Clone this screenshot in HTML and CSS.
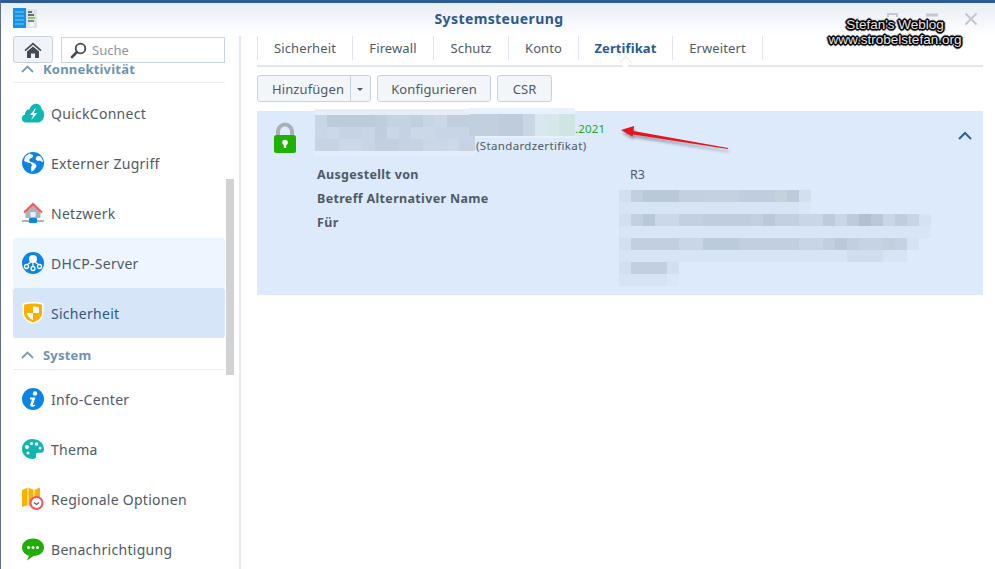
FILE: index.html
```html
<!DOCTYPE html>
<html lang="de">
<head>
<meta charset="utf-8">
<title>Systemsteuerung</title>
<link rel="stylesheet" href="styles.css">
</head>
<body>
<div class="window">
  <header class="titlebar">
    <svg class="app-icon" width="25" height="21" viewBox="0 0 25 21">
      <rect x="0" y="0" width="13" height="20" fill="#1492e6"/>
      <path d="M2 4h9M2 8h9M2 12h9M2 16h9" stroke="#7cc6f5" stroke-width="1"/>
      <rect x="13" y="1" width="11" height="19" fill="#dfe3e6"/>
      <path d="M15 4h4M15 7h6" stroke="#3a4a5a" stroke-width="1.4"/>
      <path d="M15 10h7" stroke="#7ab82e" stroke-width="1.4"/>
      <path d="M15 13h6" stroke="#3a4a5a" stroke-width="1.2"/>
      <circle cx="18.500" cy="16.500" r="2.500" fill="#f6f7f7"/>
    </svg>
    <h1 class="title">Systemsteuerung</h1>
    <div class="win-buttons">
      <svg class="win-btn win-pin" width="14" height="14" viewBox="0 0 14 14"><path d="M2 5V2h9v3" fill="none" stroke="#c3c9cf" stroke-width="2"/></svg>
      <svg class="win-btn win-min" width="14" height="14" viewBox="0 0 14 14"><path d="M1 3h12" stroke="#c3c9cf" stroke-width="3"/></svg>
      <svg class="win-btn" width="14" height="14" viewBox="0 0 14 14"><path d="M1.500 1.500l11 11M12.500 1.500l-11 11" stroke="#bfc6cd" stroke-width="1.800" fill="none"/></svg>
    </div>
  </header>

  <div class="content">
    <aside class="sidebar">
      <div class="side-tools">
        <button class="home-btn" type="button" aria-label="Start">
          <svg width="18" height="16" viewBox="0 0 18 16"><path d="M9 0.500L0.500 8l1 1.200L9 2.800l7.500 6.400 1-1.200z" fill="#3f4a55"/><path d="M3 9.500L9 4.400l6 5.100V16h-4v-4.500H7V16H3z" fill="#3f4a55"/></svg>
        </button>
        <label class="search">
          <svg width="17" height="17" viewBox="0 0 17 17"><circle cx="10.500" cy="6.500" r="4.800" fill="none" stroke="#3f4a55" stroke-width="1.800"/><path d="M7 10l-5 5" stroke="#3f4a55" stroke-width="2.600" stroke-linecap="round"/></svg>
          <span class="search-text">Suche</span>
        </label>
      </div>
      <div class="side-scroll">
        <h2 class="section section-first"><svg class="chev" width="13" height="8" viewBox="0 0 13 8"><path d="M1 7l5.500-5.500L12 7" fill="none" stroke="#7b9ab6" stroke-width="1.800"/></svg>Konnektivität</h2>
        <ul class="items">
          <li class="item">
            <svg class="ico" width="24" height="24" viewBox="0 0 24 24"><path d="M5 21.500c-2.700 0-4.200-1.900-4.200-4 0-2 1.300-3.300 3-3.800C4 10 6.300 8 8.500 8.500 9.500 5 12.200 2.500 15.500 2.800c3 .3 5 2.500 5.200 5.400 2 1.300 2.800 3.500 2.500 6-.3 4-3 7.300-7 7.300z" fill="#11b6b0"/><path d="M14.500 7l-5.500 7h3.300l-2 5 6-7h-3.300l1.800-5z" fill="#fff"/></svg>
            <span>QuickConnect</span>
          </li>
          <li class="item">
            <svg class="ico" width="24" height="24" viewBox="0 0 24 24"><circle cx="12" cy="12" r="11" fill="#0b84e3"/><path d="M8 2.500L4 6l-1 4 3.500 1.500 3 .5 1.500 2-1 2.500.5 4.500 2.500-2 2.500-3.500-.5-2-3-2-2.500-.5L8 9l1-1.500 2.500-1L12 4zM16 5l-1.500 3 2 2 2.500-.5 3 2c0-3-1.500-5-3-6.500z" fill="#fff"/></svg>
            <span>Externer Zugriff</span>
          </li>
          <li class="item">
            <svg class="ico" width="24" height="24" viewBox="0 0 24 24"><path d="M12 3.500L4.500 10.500V17h15v-6.500z" fill="#aab4bf"/><path d="M3 11.500l9-8.500 9 8.500" fill="none" stroke="#f55a5a" stroke-width="2"/><rect x="9.500" y="11" width="5" height="5" fill="#eef1f4"/><rect x="1" y="19" width="22" height="2" fill="#aab4bf"/><rect x="8" y="17" width="8" height="5" rx="1" fill="#0b84e3"/></svg>
            <span>Netzwerk</span>
          </li>
          <li class="item item-hover">
            <svg class="ico" width="24" height="24" viewBox="0 0 24 24"><circle cx="12" cy="12" r="11" fill="#0b84e3"/><circle cx="12" cy="8" r="4" fill="#fff"/><path d="M12 11v5M10 11l-4 3M14 11l4 3" stroke="#fff" stroke-width="1.200"/><g fill="#0b84e3" stroke="#fff" stroke-width="1.300"><circle cx="5.500" cy="15.500" r="2"/><circle cx="12" cy="17.500" r="2"/><circle cx="18.500" cy="15.500" r="2"/></g></svg>
            <span>DHCP-Server</span>
          </li>
          <li class="item item-active">
            <svg class="ico" width="24" height="24" viewBox="0 0 24 24"><path d="M12 1c4 0 7.500 .6 10.500 1.500V12c0 5.500-5 9.500-10.500 11C6.500 21.500 1.500 17.500 1.500 12V2.500C4.500 1.600 8 1 12 1z" fill="#fff"/><path d="M12 2.500c3.500 0 6.500 .5 9 1.200V12c0 4.500-4.200 8-9 9.500C7.200 20 3 16.500 3 12V3.700C5.500 3 8.500 2.500 12 2.500z" fill="#fbb000"/><path d="M12 5.500c2.500 0 4.500 .2 6 .7V12h-6zM12 12v7C9 17.800 6.500 15.500 6 12z" fill="#fff"/></svg>
            <span>Sicherheit</span>
          </li>
        </ul>
        <h2 class="section"><svg class="chev" width="13" height="8" viewBox="0 0 13 8"><path d="M1 7l5.500-5.500L12 7" fill="none" stroke="#7b9ab6" stroke-width="1.800"/></svg>System</h2>
        <ul class="items items-system">
          <li class="item">
            <svg class="ico" width="24" height="24" viewBox="0 0 24 24"><circle cx="12" cy="12" r="11" fill="#0b84e3"/><circle cx="14" cy="6.500" r="2.200" fill="#fff"/><path d="M9 10.500h5.500L12 17.500c-.2.800.5.800 2 0l.3.900C12.500 20 8.800 20.500 9.300 17.500L11 12.500H9z" fill="#fff"/></svg>
            <span>Info-Center</span>
          </li>
          <li class="item">
            <svg class="ico" width="24" height="24" viewBox="0 0 24 24"><path d="M11 2C5.500 2 1 6.500 1 12s4.500 10 10.500 10c3 0 4-1.500 3.500-3.200-.5-1.800.5-3 2.300-3h2.700c2 0 3-1.500 3-3.300C23 6 17.500 2 11 2z" fill="#11b6b0"/><g fill="#fff"><circle cx="6" cy="10" r="2"/><circle cx="10.500" cy="6.500" r="1.500"/><circle cx="15.500" cy="7" r="1.800"/><circle cx="19" cy="11" r="1.500"/><circle cx="7" cy="16" r="1.500"/></g></svg>
            <span>Thema</span>
          </li>
          <li class="item">
            <svg class="ico" width="24" height="24" viewBox="0 0 24 24"><path d="M1 3l6-2.500 6 2.500 6-2.500V12H13v8l-6-2-6 2z" fill="#fbb000"/><path d="M7 .5V18M13 3v14" stroke="#fff" stroke-width="1"/><circle cx="15.500" cy="16" r="6" fill="#fff" stroke="#f0545a" stroke-width="2"/><path d="M13 15.500l2.500 2 2.500-2" fill="none" stroke="#555e68" stroke-width="1.300"/></svg>
            <span>Regionale Optionen</span>
          </li>
          <li class="item">
            <svg class="ico" width="24" height="24" viewBox="0 0 24 24"><path d="M12 1.500C5.500 1.500 1 5.500 1 10.500c0 4 3 7.200 7 8.300L6 23.500l6.500-4.500C18.800 19 23 15.200 23 10.500S18.500 1.500 12 1.500z" fill="#22ad05"/><g fill="#fff"><circle cx="7.500" cy="10.500" r="1.500"/><circle cx="12" cy="10.500" r="1.500"/><circle cx="16.500" cy="10.500" r="1.500"/></g></svg>
            <span>Benachrichtigung</span>
          </li>
        </ul>
      </div>
      <div class="scrollbar"></div>
    </aside>

    <main class="main">
      <nav class="tabs">
        <a class="tab tab-a">Sicherheit</a>
        <a class="tab tab-b">Firewall</a>
        <a class="tab tab-c">Schutz</a>
        <a class="tab tab-d">Konto</a>
        <a class="tab tab-e tab-current">Zertifikat</a>
        <a class="tab tab-f">Erweitert</a>
      </nav>
      <div class="toolbar">
        <div class="btn split"><span class="split-label">Hinzufügen</span><span class="split-caret"></span></div>
        <button class="btn btn-conf" type="button">Konfigurieren</button>
        <button class="btn btn-csr" type="button">CSR</button>
      </div>
      <section class="card">
        <svg class="mosaic-head" width="260" height="48" viewBox="0 0 260 48">
          <rect x="0" y="1" width="160" height="47" fill="#e4edf9"/>
          <rect x="154" y="0" width="106" height="30" fill="#e8f0fb"/>
          <g>
            <rect x="0" y="7" width="12" height="12" fill="#c8d5e6"/><rect x="12" y="7" width="12" height="12" fill="#bccbdb"/><rect x="24" y="7" width="36" height="12" fill="#bccbdb"/><rect x="60" y="7" width="12" height="12" fill="#bfcedf"/><rect x="72" y="7" width="24" height="12" fill="#c4d2e3"/><rect x="96" y="7" width="12" height="12" fill="#c0cfe0"/><rect x="108" y="7" width="12" height="12" fill="#c8d5e6"/><rect x="120" y="7" width="12" height="12" fill="#cbd8e8"/><rect x="132" y="7" width="28" height="12" fill="#c0cee0"/>
            <rect x="0" y="19" width="12" height="12" fill="#c8d6e7"/><rect x="12" y="19" width="12" height="12" fill="#cbd8e9"/><rect x="24" y="19" width="24" height="12" fill="#c5d3e4"/><rect x="48" y="19" width="12" height="12" fill="#c8d5e7"/><rect x="60" y="19" width="12" height="12" fill="#bfcddf"/><rect x="72" y="19" width="12" height="12" fill="#c9d7e8"/><rect x="84" y="19" width="12" height="12" fill="#c4d2e4"/><rect x="96" y="19" width="24" height="12" fill="#cbd8e8"/><rect x="120" y="19" width="40" height="12" fill="#c8d5e6"/>
            <rect x="0" y="31" width="24" height="12" fill="#c5d3e4"/><rect x="24" y="31" width="24" height="12" fill="#cbd8e8"/><rect x="48" y="31" width="12" height="12" fill="#c8d5e6"/><rect x="60" y="31" width="24" height="12" fill="#c1cfe0"/><rect x="84" y="31" width="24" height="12" fill="#c4d2e3"/><rect x="108" y="31" width="24" height="12" fill="#cad7e8"/><rect x="132" y="31" width="12" height="12" fill="#ccd9ea"/><rect x="144" y="31" width="16" height="12" fill="#c6d3e5"/>
            <rect x="154" y="6" width="30" height="22" fill="#c1cfde"/><rect x="184" y="6" width="24" height="22" fill="#bfccdb"/><rect x="208" y="6" width="12" height="22" fill="#c9d6e6"/><rect x="220" y="6" width="12" height="22" fill="#d9e7ee"/><rect x="232" y="6" width="12" height="22" fill="#d6e8e8"/><rect x="244" y="6" width="16" height="22" fill="#cfe5e2"/>
          </g>
        </svg>
        <div class="card-head">
          <svg class="lock" width="24" height="31" viewBox="0 0 24 31"><path d="M5 14V9.500a7 7 0 0 1 14 0V14" fill="none" stroke="#aab0b6" stroke-width="4"/><rect x="1" y="13" width="22" height="18" rx="2.500" fill="#1fb200"/><circle cx="12" cy="20.500" r="2.800" fill="#fff"/><rect x="10.800" y="21" width="2.400" height="5" fill="#fff"/></svg>
          <div class="cert-name">
            <div class="cert-date">.2021</div>
            <div class="cert-default">(Standardzertifikat)</div>
          </div>
          <svg class="collapse" width="14" height="9" viewBox="0 0 14 9"><path d="M1 8l6-6 6 6" fill="none" stroke="#2c6294" stroke-width="2"/></svg>
        </div>
        <dl class="details">
          <dt>Ausgestellt von</dt>
          <dd>R3</dd>
          <dt>Betreff Alternativer Name</dt>
          <dd class="mosaic-cell">
            <svg class="mosaic-detail" width="324" height="96" viewBox="0 0 324 96">
              <rect x="0" y="0" width="192" height="12" fill="#c1cfe0"/><rect x="0" y="0" width="12" height="12" fill="#d2dfef"/><rect x="12" y="0" width="12" height="12" fill="#c1cfe0"/><rect x="24" y="0" width="36" height="12" fill="#b9c9d8"/><rect x="60" y="0" width="24" height="12" fill="#c3d0e0"/><rect x="84" y="0" width="36" height="12" fill="#c3d1e0"/><rect x="120" y="0" width="36" height="12" fill="#bfcddf"/><rect x="156" y="0" width="12" height="12" fill="#c5d1dc"/><rect x="168" y="0" width="12" height="12" fill="#bccadc"/><rect x="180" y="0" width="12" height="12" fill="#d2dfef"/>
              <rect x="0" y="12" width="180" height="12" fill="#d7e4f5"/><rect x="180" y="12" width="12" height="12" fill="#dae7f8"/>
              <rect x="0" y="24" width="300" height="12" fill="#c2d0e1"/><rect x="0" y="24" width="12" height="12" fill="#d2dfef"/><rect x="24" y="24" width="12" height="12" fill="#b8c8d9"/><rect x="36" y="24" width="24" height="12" fill="#cbd8e9"/><rect x="84" y="24" width="48" height="12" fill="#bfcddf"/><rect x="144" y="24" width="12" height="12" fill="#b9c9d7"/><rect x="180" y="24" width="24" height="12" fill="#c9d6e8"/><rect x="204" y="24" width="12" height="12" fill="#bdcbdd"/><rect x="216" y="24" width="12" height="12" fill="#c9d6e8"/><rect x="228" y="24" width="12" height="12" fill="#becbdd"/><rect x="240" y="24" width="12" height="12" fill="#b2c1d1"/><rect x="252" y="24" width="12" height="12" fill="#bac8da"/><rect x="264" y="24" width="12" height="12" fill="#c9d6e7"/><rect x="276" y="24" width="24" height="12" fill="#bfcddf"/><rect x="288" y="24" width="12" height="12" fill="#c7d5e6"/><rect x="300" y="24" width="12" height="12" fill="#d5e2f3"/>
              <rect x="0" y="36" width="312" height="12" fill="#d8e5f6"/>
              <rect x="0" y="48" width="288" height="12" fill="#c1cfe0"/><rect x="0" y="48" width="12" height="12" fill="#d2dfef"/><rect x="60" y="48" width="24" height="12" fill="#c9d6e8"/><rect x="84" y="48" width="36" height="12" fill="#bccbdc"/><rect x="180" y="48" width="24" height="12" fill="#c8d5e7"/><rect x="204" y="48" width="12" height="12" fill="#c1cfdf"/><rect x="216" y="48" width="12" height="12" fill="#bac8da"/><rect x="240" y="48" width="24" height="12" fill="#c6d3e5"/><rect x="264" y="48" width="12" height="12" fill="#c1cfde"/><rect x="276" y="48" width="12" height="12" fill="#c5d2e4"/><rect x="288" y="48" width="12" height="12" fill="#d5e2f3"/>
              <rect x="0" y="60" width="288" height="12" fill="#d7e4f5"/><rect x="228" y="60" width="36" height="12" fill="#d0ddee"/>
              <rect x="0" y="72" width="60" height="12" fill="#c1cfe0"/><rect x="0" y="72" width="12" height="12" fill="#d2dfef"/><rect x="48" y="72" width="12" height="12" fill="#d2dfef"/>
              <rect x="0" y="84" width="48" height="12" fill="#d6e3f4"/><rect x="48" y="84" width="12" height="12" fill="#dae7f8"/>
            </svg>
          </dd>
          <dt>Für</dt>
        </dl>
      </section>
    </main>
  </div>

  <svg class="arrow" width="120" height="30" viewBox="0 0 120 30">
    <path d="M1 7L14 3l-.5 5L108 25v1L13 11.500l-.5 2z" fill="#e8141c"/>
  </svg>
  <div class="watermark"><span>Stefan's Weblog</span><span>www.strobelstefan.org</span></div>
</div>
</body>
</html>
```

FILE: styles.css
```css
* { box-sizing: border-box; }
html, body { margin: 0; height: 100%; overflow: hidden; background: #fff; }
body {
  font-family: "Noto Sans", "Open Sans", sans-serif;
  font-size: 14px;
  color: #505a64;
}
.window {
  position: relative;
  width: 995px;
  height: 569px;
  display: flex;
  flex-direction: column;
  border-top: 3px solid #2c5a92;
  border-left: 1px solid #5d6d82;
  overflow: hidden;
}
.titlebar {
  height: 32px;
  flex: none;
  display: flex;
  align-items: center;
  padding-left: 12px;
  background: linear-gradient(#e8edf4, #fbfcfd 85%, #fff);
  position: relative;
}
.app-icon { display: block; margin-top: -1px; }
.title {
  position: absolute;
  left: 2px;
  right: 0;
  top: 7px;
  margin: 0;
  text-align: center;
  font-size: 14px;
  line-height: 18px;
  font-weight: 700;
  color: #2c5a8f;
  letter-spacing: .4px;
}
.win-buttons {
  margin-left: auto;
  margin-right: 17px;
  display: flex;
  gap: 25px;
  align-items: center;
}
.win-btn { display: block; }
.content { flex: 1; display: flex; min-height: 0; }
.sidebar {
  width: 240px;
  flex: none;
  position: relative;
  padding-left: 12px;
  padding-top: 1px;
  display: flex;
  flex-direction: column;
  min-height: 0;
}
.sidebar::after {
  content: "";
  position: absolute;
  top: 1px;
  bottom: 0;
  right: 0;
  width: 2px;
  background: #e8eaec;
}
.side-tools {
  display: flex;
  gap: 8px;
  height: 28px;
  flex: none;
  width: 212px;
  align-items: flex-start;
}
.home-btn {
  width: 40px;
  height: 27px;
  padding: 0;
  border: 1px solid #c6d2de;
  border-radius: 3px;
  background: #f0f4f9;
  display: flex;
  align-items: center;
  justify-content: center;
}
.search {
  flex: 1;
  height: 26px;
  margin-top: 1px;
  border: 1px solid #c8d4df;
  display: flex;
  align-items: center;
  gap: 5px;
  padding-left: 8px;
  background: #fff;
}
.search-text { color: #8e959c; font-size: 13px; }
.side-scroll {
  flex: 1;
  min-height: 0;
  overflow: hidden;
  width: 212px;
}
.section {
  margin: 0;
  height: 32px;
  display: flex;
  align-items: center;
  padding: 3px 0 0 8px;
  gap: 9px;
  font-size: 13px;
  font-weight: 700;
  color: #6d93b4;
  border-bottom: 1px solid #ebeef0;
  line-height: 18px;
  letter-spacing: .2px;
}
.section-first {
  margin-top: -12px;
  height: 31px;
}
.items { list-style: none; margin: 0; padding: 5px 0 0; }
.items-system { padding-top: 4px; }
.item {
  height: 50px;
  display: flex;
  align-items: center;
  gap: 6px;
  padding-left: 8px;
  border-radius: 3px;
  letter-spacing: .28px;
}
.item-hover { background: #edf5fe; }
.item-active { background: #d6e6f8; color: #34567f; }
.ico { flex: none; display: block; }
.scrollbar {
  position: absolute;
  left: 225px;
  top: 144px;
  width: 8px;
  height: 196px;
  background: #d1d2d3;
}
.main {
  flex: 1;
  min-width: 0;
  padding: 1px 12px 0 16px;
}
.tabs {
  display: flex;
  height: 31px;
  border-bottom: 2px solid #e3e6e9;
  padding-bottom: 5px;
  box-sizing: border-box;
}
.tab {
  height: 24px;
  border-left: 1px solid #dfe6ed;
  display: flex;
  align-items: center;
  justify-content: center;
  font-size: 13px;
  letter-spacing: .1px;
  position: relative;
}
.tab-a { width: 95px; }
.tab-b { width: 81px; }
.tab-c { width: 75px; }
.tab-d { width: 70px; }
.tab-e { width: 94px; }
.tab-f { width: 91px; border-right: 1px solid #dfe6ed; }
.tab-current { color: #2c5a8f; font-weight: 700; }
.tab-current::after {
  content: "";
  position: absolute;
  left: 41px;
  bottom: -8px;
  width: 10px;
  height: 10px;
  background: #fff;
  border-left: 1px solid #e3e6e9;
  border-top: 1px solid #e3e6e9;
  transform: rotate(45deg) scale(.8);
}
.toolbar {
  display: flex;
  gap: 6px;
  margin-top: 8px;
  height: 27px;
}
.btn {
  height: 27px;
  padding: 0;
  border: 1px solid #c6d2de;
  border-radius: 3px;
  background: #f2f6fa;
  color: #505a64;
  font: inherit;
  font-size: 13px;
  letter-spacing: .1px;
  display: flex;
  align-items: center;
  justify-content: center;
}
.split { width: 114px; }
.split-label {
  flex: 1;
  height: 100%;
  display: flex;
  align-items: center;
  padding-left: 14px;
  border-right: 1px solid #c6d2de;
}
.split-caret {
  width: 19px;
  position: relative;
  height: 100%;
}
.split-caret::after {
  content: "";
  position: absolute;
  left: 6px;
  top: 12px;
  border: 3px solid transparent;
  border-top: 3px solid #505a64;
  border-bottom: 0;
}
.btn-conf { width: 114px; }
.btn-csr { width: 55px; }
.card {
  position: relative;
  margin-top: 9px;
  height: 184px;
  background: #dceafb;
  padding: 11px 12px 0 16px;
}
.mosaic-head {
  position: absolute;
  left: 58px;
  top: -3px;
  display: block;
  shape-rendering: crispEdges;
}
.card-head { display: flex; align-items: flex-start; position: relative; height: 41px; }
.lock { display: block; flex: none; }
.cert-name { margin-left: 20px; flex: 1; }
.cert-date {
  margin-left: 258px;
  color: #1fa51f;
  font-size: 11.500px;
  line-height: 16px;
  margin-top: -1px;
  letter-spacing: .2px;
}
.cert-default {
  margin-left: 158px;
  margin-top: 1px;
  padding-left: 1px;
  font-size: 11.500px;
  line-height: 16px;
  background: #dceafb;
  width: 122px;
  letter-spacing: .35px;
}
.collapse { margin-top: 9px; margin-right: -1px; display: block; }
.details {
  margin: 0 0 0 44px;
  display: grid;
  grid-template-columns: 313px 1fr;
  grid-auto-rows: 24px;
  font-size: 12.500px;
  line-height: 24px;
  position: relative;
}
.details dt { font-weight: 700; color: #505a64; letter-spacing: .33px; grid-column: 1; }
.details dd { margin: 0; grid-column: 2; }
.mosaic-cell { position: relative; grid-row: 2 / span 2; }
.mosaic-detail {
  position: absolute;
  left: -11px;
  top: 3px;
  display: block;
  shape-rendering: crispEdges;
}
.arrow {
  position: absolute;
  left: 619px;
  top: 120px;
  overflow: visible;
  filter: drop-shadow(1px 3px 1.500px rgba(90, 90, 100, .55));
}
.watermark {
  position: absolute;
  left: 794px;
  top: 14px;
  width: 200px;
  display: flex;
  flex-direction: column;
  align-items: center;
  font-family: "Liberation Sans", Arial, sans-serif;
  font-size: 13.500px;
  line-height: 15px;
  color: #e8e8e8;
  text-shadow:
    1px 0 0 #000, -1px 0 0 #000, 0 1px 0 #000, 0 -1px 0 #000,
    1px 1px 0 #000, -1px -1px 0 #000, 1px -1px 0 #000, -1px 1px 0 #000,
    2px 0 1px #000, -2px 0 1px #000, 0 2px 1px #000, 0 -2px 1px #000;
}
```
